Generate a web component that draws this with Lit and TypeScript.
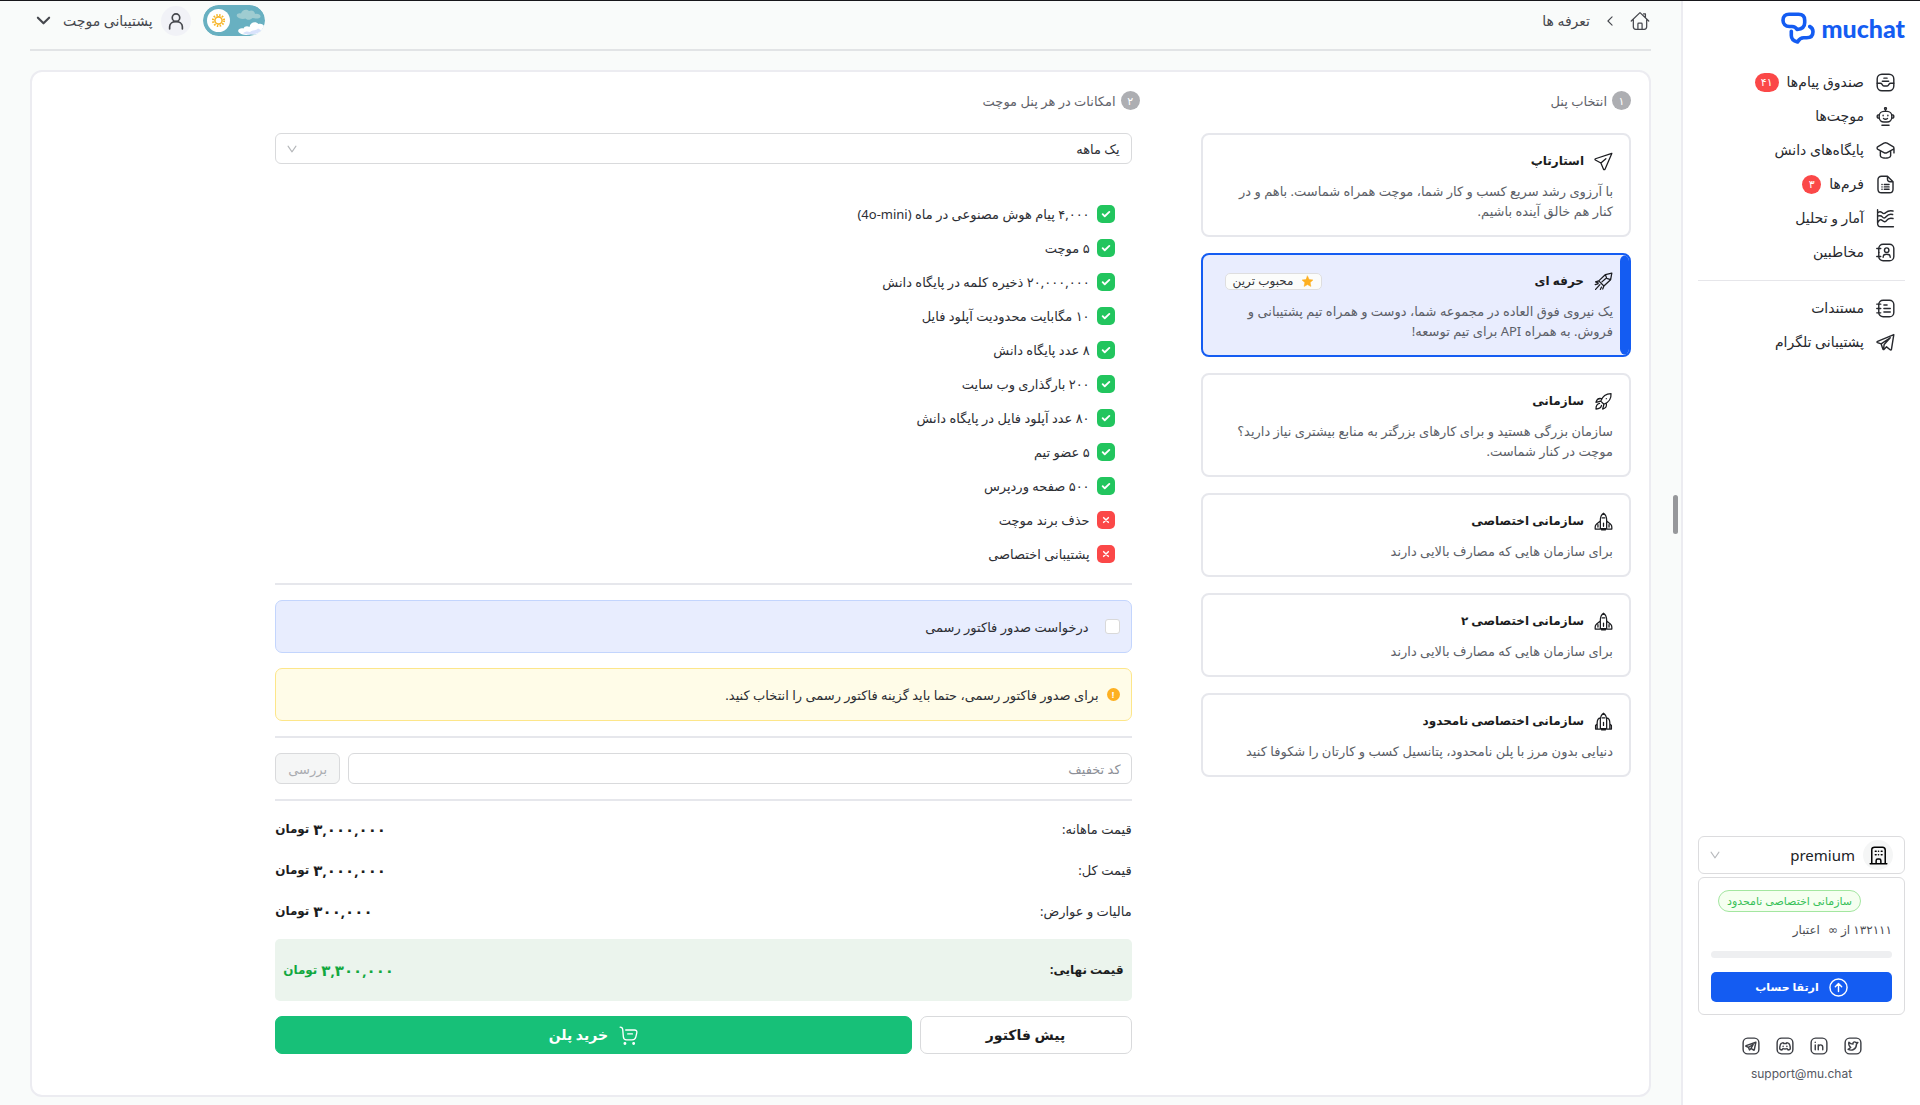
import { LitElement, html, css, svg, nothing } from "lit";
import { customElement, state } from "lit/decorators.js";
import { classMap } from "lit/directives/class-map.js";

const shapes: Record<string, unknown> = {
  inbox: svg`<rect x="1.5" y="1.5" width="21" height="21" rx="6"/><path d="M1.5 13h4c1 0 1.7.5 2.200 1.300l.6 1c.5.8 1.200 1.200 2.200 1.200h3c1 0 1.700-.4 2.200-1.200l.6-1c.5-.8 1.200-1.300 2.200-1.300h4M10 6.500h4M8 10.500h8"/>`,
  bot: svg`<circle cx="12" cy="2" r="1.200"/><path d="M12 3.500v2M7.500 23h9"/><rect x="4" y="5.500" width="16" height="13.500" rx="6"/><path d="M4 10c-1.500-.3-2.500.3-2.500 2s1 2.300 2.500 2M20 10c1.500-.3 2.500.3 2.500 2s-1 2.300-2.500 2M9 10.500v.5M15 10.500v.5M9.500 14.500c1.500 1.200 3.500 1.200 5 0"/>`,
  cap: svg`<path d="M10 2.800 2.500 7c-1.500.9-1.500 2.600 0 3.500L10 14.700c1.300.7 2.700.7 4 0l7.500-4.200c1.500-.9 1.500-2.600 0-3.500L14 2.800c-1.300-.7-2.700-.7-4 0ZM5.500 12.500v6c0 1.500 1 2 2.500 2.500 2.600.8 5.400.8 8 0 1.500-.5 2.500-1 2.500-2.500v-6M22.700 9.500V15"/>`,
  doc: svg`<path d="M14.500 1.500H7C4.200 1.500 2.500 3.200 2.500 6v12c0 2.800 1.700 4.500 4.500 4.500h10c2.800 0 4.500-1.700 4.500-4.500V8.500ZM14.500 1.500V5c0 2.300 1.200 3.500 3.500 3.500h3.500M7.500 12h.2M7.500 15h.2M7.500 18h.2M10.500 12h6M10.500 15h6M10.500 18h6"/>`,
  chart: svg`<path d="M2 1v17c0 3 1.500 4.500 4.500 4.500H22M2 5c2-2 4-2 5.500-.5s3 2 5 0S17 1.500 21.500 2.500M2 9c3-1 4.500-1 6 1s3 2 5-.5 4-3.500 8-2.500M2 17.500c2-4 4-5 6-3s4 2.500 5.500 0 4-3.500 8-2.500"/>`,
  contact: svg`<rect x="3.500" y="1.500" width="19" height="21" rx="5.500"/><path d="M1 7h5M1 17h5M3.500 12h.1"/><circle cx="13.500" cy="9" r="2.800"/><path d="M9 18c0-5 9-5 9 0"/>`,
  notes: svg`<rect x="3.500" y="1.500" width="19" height="21" rx="5.500"/><path d="M1 6.500h5M1 12h5M1 17.500h5M10 7.500h4M10 12h8M10 16.500h8"/>`,
  plane: svg`<path d="M22.500 1.800 1.800 8.500c-.8.300-.8 1.200-.1 1.600l7 3.800 3.300 7.800c.4.900 1.500.9 1.900 0l8.600-19.900ZM8.700 13.900 15 8.500"/>`,
  telegram: svg`<path d="M22.500 2 2 10.500c-1 .4-1 1.200-.1 1.600l4.600 1.700 2.200 6.400c.3.900 1 1 1.600.3l3-3 4.500 3.700c.7.5 1.500.3 1.700-.6L22.500 2ZM6.500 13.800 18 6l-7.700 8.500-.8 6"/>`,
  rocketOne: svg`<path d="m22.500 1.500-8 1.700-8.500 8 6.500 6.500 8.500-8ZM14.500 3.500l1.500 4.500 5 1.500M10 12.500l4.500-4M6 11.200 2 12.500l3.500 1.500M12.500 17.700 11 21.500M7.500 16 2 22M5 15l-3.500 1M9.500 19 8 22"/>`,
  rocketTwo: svg`<path d="M8.500 11.500c2-5.500 6.500-9.500 13-9.500.5 6.500-3.500 11.300-9 13.500l-4-4ZM9.500 8.500C6 7.500 3.500 9.500 2.500 13c2-.6 4-.8 6-1.500M15.500 14.500c1 3.500-1 6-4.500 7 .6-2 1-4 1.500-6M7 14.500c-3 .5-4.500 3-4.500 7 4-.2 6.500-1.500 7-4.500M15.500 8.500h.1"/>`,
  shuttle: svg`<path d="M12 1.500c-3 2-4 5-4 9V21h8V10.500c0-4-1-7-4-9ZM8 11.500 3 15.500c-1.200 1-1.500 2-1.500 3.500v2.500H8M16 11.500l5 4c1.200 1 1.500 2 1.500 3.500v2.500H16M12 14v4M10.500 7.500h3M9.500 21v1.500h5V21M5 16v3M19 16v3"/>`,
  shuttles: svg`<path d="M12 1.500c-3 2-4 5-4 9V21h8V10.500c0-4-1-7-4-9ZM8 7.500c-3 .5-4 3-4 6.500v7.500h4M16 7.500c3 .5 4 3 4 6.500v7.500h-4M4 15l-2 2v4.500h2M20 15l2 2v4.500h-2M12 13v4M10.500 7.500h3M9.500 21v1.500h5V21"/>`,
  home: svg`<path d="M1.500 12 12 2l10.500 10M18.500 8V3.500h-2.300M4 10v9c0 2 1 3 3 3h10c2 0 3-1 3-3v-9M9.500 22v-6.500c0-.7.300-1 1-1h3c.7 0 1 .3 1 1V22"/>`,
  building: svg`<path d="M1.500 22.500h21M3.500 22.500V5c0-2.300 1.200-3.500 3.500-3.500h10c2.300 0 3.500 1.200 3.500 3.500v17.500M9 22.500v-4c0-1.500.8-2.200 2-2.200h2c1.200 0 2 .7 2 2.200v4M8 6.500h1M12 6.500h.1M15.500 6.500h1M8 11h1M12 11h.1M15.500 11h1"/>`,
  user: svg`<circle cx="12" cy="7.500" r="5"/><path d="M3.500 22.500v-3c0-9 17-9 17 0v3"/>`,
  down: svg`<path d="m3 7.500 9 9 9-9"/>`,
  thinDown: svg`<path d="m2.500 5 9.500 14L21.500 5"/>`,
  back: svg`<path d="m17 2-10 10 10 10"/>`,
  up: svg`<circle cx="12" cy="12" r="10.800"/><path d="M12 17V7M8 11l4-4 4 4"/>`,
  cart: svg`<path d="M1.500 1.500c2.500 0 3 .8 3.200 3l.8 9c.2 2.500 1.500 4 4 4h7c2.500 0 4-1.200 4.700-3.500l1.200-5c.7-2.500-.3-4-3-4H8.500M11 10h6"/><circle cx="7.500" cy="22" r="1"/><circle cx="18.500" cy="22" r="1"/>`,
  tick: svg`<path d="m4 12.500 5 5L20 7"/>`,
  cross: svg`<path d="m5 5 14 14M19 5 5 19"/>`,
  star: svg`<path d="m12 2 3 6.300 7 .9-5.100 4.800 1.300 7L12 17.600 5.800 21l1.300-7L2 9.200l7-.9Z"/>`,
  twitter: svg`<rect x="1.500" y="1.500" width="21" height="21" rx="6"/><path d="M5.500 16.500c4.500 2.300 11 .5 11.200-7l1.800-2.200-2.500.2c-2-2-4.500-.6-4 2-2.500 0-4.200-.9-5.500-2.500-.7 3 0 5 2.500 7-1 .9-2.200 1.600-3.500 2.500Z"/>`,
  linkedin: svg`<rect x="1.500" y="1.500" width="21" height="21" rx="6"/><path d="M7 10.500V17M7 7v.2M11 17v-6.500M11 13.500c0-4 6-4 6 0V17"/>`,
  discord: svg`<rect x="1.500" y="1.500" width="21" height="21" rx="6"/><path d="M9.500 7.500C7 8 6 8.500 5.500 11c-.5 2-.7 3.500-.5 5 1 1 2 1.300 3 1.300l1.200-1.800c1.800.5 3.800.5 5.600 0l1.200 1.800c1 0 2-.3 3-1.300.2-1.500 0-3-.5-5-.5-2.500-1.500-3-4-3.500l-.7 1.200h-3.600l-.7-1.200ZM9.500 12.200v.4M14.500 12.200v.4"/>`,
  tgbox: svg`<rect x="1.500" y="1.500" width="21" height="21" rx="6"/><path d="M18.500 7 5.500 11.500c-.6.300-.6.800 0 1l3 1.200 1.500 3.500 2-2 3.500 2.300c.5.200.8 0 .9-.5L18.500 7ZM8.500 13.700 15 10l-3 5.200"/>`,
};

const icon = (name: string, size: number, weight = 1.7, cls = "") =>
  html`<svg class="icon ${cls}" width=${size} height=${size} viewBox="0 0 24 24" fill="none" stroke="currentColor"
    stroke-width=${weight} stroke-linecap="round" stroke-linejoin="round" aria-hidden="true">${shapes[name]}</svg>`;

const menu = [
  { icon: "inbox", text: "صندوق پیام‌ها", count: "۴۱" },
  { icon: "bot", text: "موچت‌ها" },
  { icon: "cap", text: "پایگاه‌های دانش" },
  { icon: "doc", text: "فرم‌ها", count: "۳" },
  { icon: "chart", text: "آمار و تحلیل" },
  { icon: "contact", text: "مخاطبین" },
];

const help = [
  { icon: "notes", text: "مستندات" },
  { icon: "telegram", text: "پشتیبانی تلگرام" },
];

const plans = [
  { icon: "plane", name: "استارتاپ", text: "با آرزوی رشد سریع کسب و کار شما، موچت همراه شماست. باهم و در کنار هم خالق آینده باشیم." },
  { icon: "rocketOne", name: "حرفه ای", popular: true, text: "یک نیروی فوق العاده در مجموعه شما، دوست و همراه تیم پشتیبانی و فروش. به همراه API برای تیم توسعه!" },
  { icon: "rocketTwo", name: "سازمانی", text: "سازمان بزرگی هستید و برای کارهای بزرگتر به منابع بیشتری نیاز دارید؟ موچت در کنار شماست." },
  { icon: "shuttle", name: "سازمانی اختصاصی", text: "برای سازمان هایی که مصارف بالایی دارند" },
  { icon: "shuttle", name: "سازمانی اختصاصی ۲", text: "برای سازمان هایی که مصارف بالایی دارند" },
  { icon: "shuttles", name: "سازمانی اختصاصی نامحدود", text: "دنیایی بدون مرز با پلن نامحدود، پتانسیل کسب و کارتان را شکوفا کنید" },
];

const features = [
  { text: "۴,۰۰۰ پیام هوش مصنوعی در ماه (4o-mini)", on: true },
  { text: "۵ موچت", on: true },
  { text: "۲۰,۰۰۰,۰۰۰ ذخیره کلمه در پایگاه دانش", on: true },
  { text: "۱۰ مگابایت محدودیت آپلود فایل", on: true },
  { text: "۸ عدد پایگاه دانش", on: true },
  { text: "۲۰۰ بارگذاری وب سایت", on: true },
  { text: "۸۰ عدد آپلود فایل در پایگاه دانش", on: true },
  { text: "۵ عضو تیم", on: true },
  { text: "۵۰۰ صفحه وردپرس", on: true },
  { text: "حذف برند موچت", on: false },
  { text: "پشتیبانی اختصاصی", on: false },
];

const prices = [
  { label: "قیمت ماهانه:", value: "۳,۰۰۰,۰۰۰" },
  { label: "قیمت کل:", value: "۳,۰۰۰,۰۰۰" },
  { label: "مالیات و عوارض:", value: "۳۰۰,۰۰۰" },
];

const base = css`
  * { box-sizing: border-box; }
  h2, p, ul, hr, button, input, select { margin: 0; padding: 0; }
  h2 { font: inherit; }
  .icon { flex: none; display: block; }
  button, select, input { font: inherit; color: inherit; }
  button { cursor: pointer; }
  a { color: inherit; text-decoration: none; }
  ul { list-style: none; }
  select { appearance: none; border: 0; background: transparent; outline: 0; flex: 1; min-width: 0; align-self: stretch; }
`;

@customElement("side-bar")
class SideBar extends LitElement {
  static styles = [base, css`
    :host { display: flex; flex-direction: column; background: #fff; border-left: 2px solid #ececf1; padding: 9px 15px 21px; }
    .brand { display: flex; align-items: center; gap: 6px; height: 36px; color: #145cf2; }
    .word { font: 900 25px/34px Lato, "Open Sans", sans-serif; }
    .menu { display: flex; flex-direction: column; padding: 19px 8px 0; font-size: 14px; }
    .link { display: flex; align-items: center; gap: 12px; height: 34px; padding-right: 2px; color: #27292e; }
    .pill { display: inline-flex; align-items: center; justify-content: center; min-width: 19px; height: 19px; border-radius: 10px; background: #fb4848; color: #fff; font-size: 11px; padding: 0 6px; margin-right: -4px; }
    .rule { border: 0; border-top: 1px solid #e6e6ea; margin-top: 11px; }
    .second { padding-top: 10px; }
    .foot { margin-top: auto; display: flex; flex-direction: column; }
    .org { display: flex; align-items: center; gap: 8px; height: 38px; border: 1px solid #dcdcde; border-radius: 6px; padding: 0 11px; }
    .orgIcon { display: flex; align-items: center; justify-content: center; width: 30px; height: 30px; border-radius: 50%; background: #f5f6f6; }
    .org select { font-size: 15px; color: #202226; }
    .pale { color: #b8babd; }
    .usage { margin-top: 3px; border: 1px solid #dcdcde; border-radius: 6px; padding: 12px; display: flex; flex-direction: column; }
    .tag { align-self: flex-end; margin-left: 7px; height: 22px; border: 1px solid #a3e6a0; background: #f5fff0; color: #38c158; border-radius: 11px; padding: 0 8px; line-height: 20px; font-size: 11px; white-space: nowrap; }
    .credit { display: flex; gap: 8px; height: 24px; line-height: 24px; margin-top: 6px; color: #4b4d54; }
    .bar { appearance: none; display: block; width: 100%; height: 7px; border: 0; border-radius: 4px; background: #eeeff1; margin-top: 9px; overflow: hidden; }
    .bar::-webkit-progress-bar { background: #eeeff1; }
    .bar::-webkit-progress-value { background: #145cf2; }
    .upgrade { display: flex; align-items: center; justify-content: center; gap: 10px; height: 30px; margin-top: 14px; border: 0; border-radius: 5px; background: #145cf2; color: #fff; font-weight: 700; font-size: 11px; }
    .social { display: flex; justify-content: center; gap: 16px; margin-top: 22px; color: #3d3f45; }
    .mail { align-self: center; margin-top: 9px; font: 12px/20px Inter, "DejaVu Sans", sans-serif; color: #55575f; }
  `];

  private item(entry: { icon: string; text: string; count?: string }) {
    return html`<li><a class="link" href="#">${icon(entry.icon, 19, 1.8)}<span>${entry.text}</span>
      ${entry.count ? html`<span class="pill">${entry.count}</span>` : nothing}</a></li>`;
  }

  render() {
    return html`
      <a class="brand" href="#">
        <span class="word">muchat</span>
        <svg class="icon" width="34" height="33" viewBox="0 0 34 33" fill="none" stroke="currentColor" stroke-width="3.600" stroke-linejoin="round" stroke-linecap="round" aria-hidden="true">
          <path d="M16 17.500c-1.200-2.300-2.500-3-5-3H8.500C4.300 14.500 2 12 2 8.300 2 4.500 4.300 2.200 8 2.200h9.500c4 0 6.200 2.300 6.200 6v2.500c0 4-2.700 6.300-7.700 6.800Z"/>
          <path d="M28.700 14.500c2.200 1 3.300 2.700 3.300 5.300 0 4-2.300 6-6.300 6h-3c-2.700 0-4.400 1.200-6.200 4.200-4-1-6.200-3-6.200-6.500v-4.200"/>
        </svg>
      </a>
      <nav>
        <ul class="menu">${menu.map((m) => this.item(m))}</ul>
        <hr class="rule" />
        <ul class="menu second">${help.map((m) => this.item(m))}</ul>
      </nav>
      <div class="foot">
        <label class="org">
          <span class="orgIcon">${icon("building", 19, 1.9)}</span>
          <select aria-label="سازمان"><option>premium</option></select>
          ${icon("thinDown", 10, 2.500, "pale")}
        </label>
        <section class="usage">
          <span class="tag">سازمانی اختصاصی نامحدود</span>
          <p class="credit"><span>۱۳۲۱۱۱ از ∞</span><span>اعتبار</span></p>
          <progress class="bar" max="100" value="0" aria-label="اعتبار"></progress>
          <button class="upgrade">${icon("up", 19, 1.8)}ارتقا حساب</button>
        </section>
        <div class="social">
          ${["twitter", "linkedin", "discord", "tgbox"].map((s) => html`<a href="#" aria-label=${s}>${icon(s, 18, 1.9)}</a>`)}
        </div>
        <a class="mail" href="mailto:support@mu.chat">support@mu.chat</a>
      </div>`;
  }
}

@customElement("top-bar")
class TopBar extends LitElement {
  static styles = [base, css`
    :host { display: flex; align-items: center; justify-content: space-between; padding: 4px 0 13px; border-bottom: 2px solid #e2e4e6; color: #45474d; font-size: 14px; }
    .group { display: flex; align-items: center; }
    .crumbs { gap: 15px; padding-right: 1px; }
    .crumbs a { display: block; }
    .user { display: flex; align-items: center; gap: 8px; border: 0; background: none; color: inherit; }
    .face { display: flex; align-items: center; justify-content: center; width: 30px; height: 30px; border-radius: 50%; background: #f1f2f7; }
    .account { gap: 12px; padding-left: 6px; }
    .switch { display: block; border: 0; background: none; border-radius: 16px; overflow: hidden; height: 31px; }
    .name { margin-left: 4px; }
  `];

  render() {
    return html`
      <nav class="group crumbs">
        <a href="#" aria-label="خانه">${icon("home", 20, 1.500)}</a>
        ${icon("back", 10, 2.600)}
        <a href="#">تعرفه ها</a>
      </nav>
      <div class="group account">
        <button class="switch" role="switch" aria-checked="false" aria-label="حالت تیره">
          <svg class="icon" width="62" height="31" viewBox="0 0 62 31" aria-hidden="true">
            <rect width="62" height="31" rx="15.500" fill="#68b0c1"/>
            <path d="M34 11.500c-1.200-2.500 2-4 4-3 .8-3.500 5.500-5 8-2.500 3-1.500 6 .5 6 3 2.500-.8 6 .5 5.500 3-1.500 2.200-5.500 1.500-8 1-2 2-5 2.500-7 .5-3 1-7 0-8.500-2Z" fill="#9fccd1"/>
            <path d="M35.500 27c-1.500-3 2.500-4.500 5-3.500.8-2.500 4-3 6-1.500.5-4.500 6-6.500 9-3 2.500-.8 5 .5 6 2.500-1 4-4 7-8 8-3 .8-5-1-7 0-3 .8-9 .5-11-2.500Z" fill="#fff"/>
            <path d="M40 28.300c2-1.800 4.500-2.300 7-1.200 2.500-2.500 6-1.500 8-3.600 1.500.5 2.500 1.200 3 2.300-2 2-4.500 3.200-7 3.200-3.500.5-7.500.8-11-.7Z" fill="#d8e2fb"/>
            <circle cx="15.500" cy="15.500" r="11.500" fill="#fff"/>
            <g stroke="#f7b62b" fill="none"><circle cx="15.500" cy="15.500" r="3.600" stroke-width="1.600"/>
              <circle cx="15.500" cy="15.500" r="5.600" stroke-width="2" stroke-dasharray="1.500 1.432"/></g>
          </svg>
        </button>
        <button class="user">
          <span class="face">${icon("user", 18, 2.200)}</span>
          <span class="name">پشتیبانی موچت</span>
          ${icon("down", 15, 3.400)}
        </button>
      </div>`;
  }
}

@customElement("plan-picker")
class PlanPicker extends LitElement {
  @state() private chosen = 1;

  static styles = [base, css`
    :host { display: flex; flex-direction: column; gap: 16px; }
    .card { position: relative; display: flex; flex-direction: column; gap: 8px; padding: 14px 16px 14px 22px; border: 2px solid #e6e7ec; border-radius: 8px; background: #fff; overflow: hidden; cursor: pointer; }
    .chosen { border-color: #145cf2; background: #e9edfe; }
    .chosen::before { content: ""; position: absolute; top: 0; bottom: 0; right: -1px; width: 10px; border-radius: 6px 0 0 6px; background: #145cf2; }
    .radio { position: absolute; opacity: 0; }
    .head { display: flex; align-items: center; gap: 10px; height: 24px; color: #1b1c20; }
    .name { font-size: 12px; font-weight: 700; }
    .popular { display: flex; align-items: center; gap: 8px; margin-right: auto; height: 17px; padding: 0 7px; border: 1px solid #dededf; border-radius: 5px; background: #fbfcfb; font-size: 12px; color: #33353a; }
    .star { fill: #fdb022; color: #fdb022; }
    .text { line-height: 20px; color: #5c5f68; font-size: 13px; }
  `];

  render() {
    return plans.map((p, i) => html`
      <label class=${classMap({ card: true, chosen: i === this.chosen })}>
        <input class="radio" type="radio" name="plan" .checked=${i === this.chosen} @change=${() => (this.chosen = i)} />
        <span class="head">${icon(p.icon, 19, 1.600)}<span class="name">${p.name}</span>
          ${p.popular ? html`<span class="popular">${icon("star", 13, 1, "star")}محبوب ترین</span>` : nothing}</span>
        <span class="text">${p.text}</span>
      </label>`);
  }
}

@customElement("plan-details")
class PlanDetails extends LitElement {
  static styles = [base, css`
    :host { display: flex; flex-direction: column; color: #2c2e34; font-size: 13px; }
    .period { display: flex; align-items: center; height: 31px; border: 1px solid #d9dadc; border-radius: 6px; padding: 0 11px; }
    .pale { color: #b5b7ba; }
    .features { padding: 33px 17px 0; }
    .feature { display: flex; align-items: center; gap: 7px; height: 34px; }
    .mark { display: flex; align-items: center; justify-content: center; width: 18px; height: 18px; border-radius: 5px; background: #22c55e; color: #fff; }
    .off { background: #fb4848; }
    .rule { border: 0; border-top: 2px solid #e6e7ec; margin: 15px 0; }
    .first { margin-top: 12px; }
    .box { display: flex; align-items: center; height: 53px; border: 1px solid #c3d5fd; border-radius: 7px; background: #e8edfe; padding: 0 11px; gap: 16px; }
    .warn { border-color: #fde68a; background: #fffce8; margin-top: 15px; gap: 8px; }
    .check { appearance: none; width: 15px; height: 15px; border: 1px solid #d9d9d9; border-radius: 3px; background: #fff; }
    .alert { display: flex; align-items: center; justify-content: center; width: 13px; height: 13px; border-radius: 50%; background: #fdb022; color: #fff; font-size: 9px; font-weight: 700; }
    .coupon { display: flex; gap: 8px; height: 31px; }
    .code { flex: 1; min-width: 0; border: 1px solid #d9dadc; border-radius: 6px; padding: 0 10px; background: #fff; outline: 0; }
    .code::placeholder { color: #8d9098; }
    .verify { width: 65px; border: 1px solid #d9dadc; border-radius: 6px; background: #f5f6f6; color: #aaacb1; }
    .prices { display: flex; flex-direction: column; gap: 17px; padding-top: 1px; margin-bottom: 16px; }
    .price { display: flex; align-items: center; justify-content: space-between; height: 24px; }
    .amount { display: flex; align-items: center; gap: 4px; font-weight: 700; color: #1b1c20; font-size: 12px; }
    .number { font-size: 15px; }
    .total { height: 62px; border-radius: 5px; background: #ebf4ed; padding: 0 8px; color: #1b1c20; font-weight: 700; font-size: 12px; }
    .total .amount { color: #12a83f; }
    .actions { display: grid; grid-template-columns: 1fr 3fr; gap: 8px; margin-top: 15px; }
    .act { display: flex; align-items: center; justify-content: center; gap: 11px; height: 38px; border-radius: 7px; border: 1px solid #d9dadc; background: #fff; font-size: 14px; font-weight: 700; color: #1b1c20; }
    .buy { background: #17c078; border-color: #17c078; color: #fff; }
  `];

  private amount(value: string) {
    return html`<span class="amount"><span class="number">${value}</span>تومان</span>`;
  }

  render() {
    return html`
      <label class="period">
        <select aria-label="دوره"><option>یک ماهه</option></select>
        ${icon("thinDown", 10, 2.600, "pale")}
      </label>
      <ul class="features">
        ${features.map((f) => html`<li class="feature">
          <span class=${classMap({ mark: true, off: !f.on })}>${icon(f.on ? "tick" : "cross", f.on ? 10 : 8, 4.500)}</span>
          <span>${f.text}</span></li>`)}
      </ul>
      <hr class="rule first" />
      <label class="box"><input class="check" type="checkbox" />درخواست صدور فاکتور رسمی</label>
      <p class="box warn"><span class="alert">!</span>برای صدور فاکتور رسمی، حتما باید گزینه فاکتور رسمی را انتخاب کنید.</p>
      <hr class="rule" />
      <form class="coupon" @submit=${(e: Event) => e.preventDefault()}>
        <input class="code" type="text" placeholder="کد تخفیف" aria-label="کد تخفیف" />
        <button class="verify" disabled>بررسی</button>
      </form>
      <hr class="rule" />
      <div class="prices">
        ${prices.map((p) => html`<div class="price"><span>${p.label}</span>${this.amount(p.value)}</div>`)}
      </div>
      <div class="price total"><span>قیمت نهایی:</span>${this.amount("۳,۳۰۰,۰۰۰")}</div>
      <div class="actions">
        <button class="act">پیش فاکتور</button>
        <button class="act buy">${icon("cart", 19, 1.700)}خرید پلن</button>
      </div>`;
  }
}

@customElement("app-root")
class AppRoot extends LitElement {
  static styles = [base, css`
    :host { display: block; direction: rtl; font: 12px/20px "Noto Sans", "DejaVu Sans", sans-serif; }
    .page { position: relative; display: grid; grid-template-columns: 239px minmax(0, 1fr); min-height: 100vh; border-top: 1px solid #17171b; background: #f9fbfa; }
    .main { padding: 0 30px 8px; display: flex; flex-direction: column; gap: 19px; }
    .panel { flex: 1; display: grid; grid-template-columns: 118fr 237fr 45fr; gap: 61px; padding: 19px 18px; border: 2px solid #ececf1; border-radius: 12px; background: #fff; }
    .step { display: flex; align-items: center; gap: 5px; height: 19px; margin-bottom: 23px; color: #5f626a; font-size: 13px; }
    .dot { display: flex; align-items: center; justify-content: center; width: 19px; height: 19px; border-radius: 50%; background: #adaeb2; color: #fff; font-size: 11px; }
    .inset { padding-right: 8px; }
    .thumb { position: absolute; left: calc(100% - 247px); top: 494px; width: 5px; height: 39px; border-radius: 3px; background: #97989b; }
  `];

  render() {
    return html`
      <div class="page" dir="rtl">
        <side-bar></side-bar>
        <main class="main">
          <top-bar></top-bar>
          <div class="panel">
            <section>
              <h2 class="step"><span class="dot">۱</span>انتخاب پنل</h2>
              <plan-picker></plan-picker>
            </section>
            <section>
              <h2 class="step"><span class="dot">۲</span>امکانات در هر پنل موچت</h2>
              <plan-details class="inset"></plan-details>
            </section>
          </div>
        </main>
        <span class="thumb"></span>
      </div>`;
  }
}
